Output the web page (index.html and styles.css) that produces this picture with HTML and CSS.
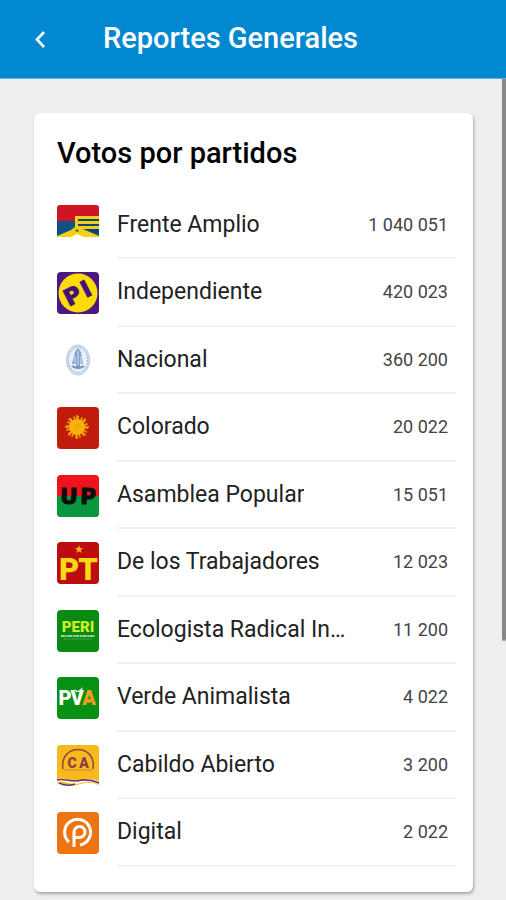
FILE: index.html
```html
<!DOCTYPE html>
<html lang="es">
<head>
<meta charset="utf-8">
<meta name="viewport" content="width=device-width, initial-scale=1">
<title>Reportes Generales</title>
<link rel="stylesheet" href="styles.css">
</head>
<body>
<header class="bar">
  <button class="back" type="button" aria-label="Volver">
    <svg viewBox="0 0 24 24" width="24" height="24"><path d="M16 5L9 12.500l7 7.500" fill="none" stroke="#fff" stroke-width="2.600"/></svg>
  </button>
  <h1 class="bar-title">Reportes Generales</h1>
</header>
<main class="content">
  <section class="card">
    <h2 class="card-title">Votos por partidos</h2>
    <ul class="list">
      <li class="row">
        <svg class="logo" viewBox="0 0 42 42"><path d="M3 0H39Q42 0 42 3V17H0V3Q0 0 3 0Z" fill="#cf1426"/><path d="M0 16H42V31H0Z" fill="#0d5187"/><path d="M18 25V12H42V28Z" fill="#12436d"/><path d="M18 11H42V14H21V16H42V19H21V21H42V24H26L42 31V32H0V31L14 25L18 22Z" fill="#f2cf18"/><path d="M18 26L20 24L22 26L20 27Z" fill="#725c12"/><path d="M14 32L20 29L27 32Z" fill="#fff"/></svg>
        <div class="entry"><span class="name">Frente Amplio</span><span class="votes">1 040 051</span></div>
      </li>
      <li class="row">
        <svg class="logo" viewBox="0 0 42 42"><rect width="42" height="42" rx="4" fill="#4b1882"/><circle cx="21" cy="21" r="19.500" fill="#fedb05"/><text class="mark wide" y="29" font-size="23" fill="#421276" stroke="#421276" stroke-width="1" transform="rotate(-27 21 21)"><tspan x="15">P</tspan><tspan x="30">I</tspan></text></svg>
        <div class="entry"><span class="name">Independiente</span><span class="votes">420 023</span></div>
      </li>
      <li class="row">
        <svg class="logo" viewBox="0 0 42 42"><ellipse cx="21" cy="20" rx="11.500" ry="15" fill="#d5e1f1" stroke="#b3c6df"/><ellipse cx="21" cy="20" rx="9.500" ry="12.500" fill="#e8f0f9" stroke="#9db5d5" stroke-dasharray="2 1"/><path d="M21 8L24 12L26 24H23V27H19V24H15L18 12Z" fill="#83a0c8"/><path d="M21 11V25M18 16V25M24 16V25" stroke="#dce8f5"/><path d="M15 26Q21 30 27 26" fill="none" stroke="#6f91bf" stroke-width="2"/></svg>
        <div class="entry"><span class="name">Nacional</span><span class="votes">360 200</span></div>
      </li>
      <li class="row">
        <svg class="logo" viewBox="0 0 42 42"><rect width="42" height="42" rx="4" fill="#c01b0b"/><circle cx="20" cy="20" r="9" fill="none" stroke="#ed9d09" stroke-width="4" stroke-dasharray="1.600 1.930"/><circle cx="20" cy="20" r="8" fill="#f9b40d"/><path d="M20 8V32M8 20H32M11.500 11.500L28.500 28.500M28.500 11.500L11.500 28.500" stroke="#f7aa0b" stroke-width="1.500"/></svg>
        <div class="entry"><span class="name">Colorado</span><span class="votes">20 022</span></div>
      </li>
      <li class="row">
        <svg class="logo" viewBox="0 0 42 42"><rect width="42" height="42" rx="4" fill="#ed141d"/><path d="M0 21H42V38Q42 42 38 42H4Q0 42 0 38Z" fill="#08973f"/><text class="mark wide" y="29" font-size="22" fill="#0b0d0a" stroke="#0b0d0a"><tspan x="12">U</tspan><tspan x="31">P</tspan></text></svg>
        <div class="entry"><span class="name">Asamblea Popular</span><span class="votes">15 051</span></div>
      </li>
      <li class="row">
        <svg class="logo" viewBox="0 0 42 42"><rect width="42" height="42" rx="4" fill="#bd0c0d"/><path d="M22 3L23 6H26L23.700 8L24.600 11L22 9.200L19.400 11L20.300 8L18 6H21Z" fill="#f7ba11"/><text class="mark thin" y="38" font-size="31" fill="#f8d817"><tspan x="12">P</tspan><tspan x="31">T</tspan></text></svg>
        <div class="entry"><span class="name">De los Trabajadores</span><span class="votes">12 023</span></div>
      </li>
      <li class="row">
        <svg class="logo" viewBox="0 0 42 42"><rect width="42" height="42" rx="4" fill="#088a13"/><text class="mark thin" x="21" y="22" font-size="15" fill="#c9ef22">PERI</text><path d="M4 26H38" stroke="#9bd39a" stroke-width="2" stroke-dasharray="4 .7 2 .5"/><path d="M7 29H35" stroke="#4cab50" stroke-dasharray="3 .7"/></svg>
        <div class="entry"><span class="name">Ecologista Radical In…</span><span class="votes">11 200</span></div>
      </li>
      <li class="row">
        <svg class="logo" viewBox="0 0 42 42"><rect width="42" height="42" rx="4" fill="#069113"/><text class="mark thin" y="28" font-size="20" fill="#fff"><tspan x="8">P</tspan><tspan x="20">V</tspan><tspan x="32" fill="#f49b20">A</tspan></text><path d="M17 12L21 14L26 10L24 15H19Z" fill="#e4f4e4"/><circle cx="32" cy="24" r="2" fill="#f49b20"/></svg>
        <div class="entry"><span class="name">Verde Animalista</span><span class="votes">4 022</span></div>
      </li>
      <li class="row">
        <svg class="logo" viewBox="0 0 42 42"><path d="M4 0H38Q42 0 42 4V40Q32 36 24 39Q12 43 0 38V4Q0 0 4 0Z" fill="#f8b91d"/><path d="M6 24C2 -2 40 -2 36 24" fill="none" stroke="#8d4845" stroke-width="1.500"/><path d="M7 25H35" stroke="#ce8635"/><text class="mark thin" y="23" font-size="14" fill="#8d3e48"><tspan x="15">C</tspan><tspan x="27">A</tspan></text><path d="M0 36Q5 34 10 36T22 37Q31 33 42 38" fill="none" stroke="#fff" stroke-width="3"/><path d="M0 35Q4 34 9 35T20 36Q31 33 42 38" fill="none" stroke="#73345d" stroke-width="1.500"/><path d="M2 38Q10 42 18 39" fill="none" stroke="#544078" stroke-width="1.500"/></svg>
        <div class="entry"><span class="name">Cabildo Abierto</span><span class="votes">3 200</span></div>
      </li>
      <li class="row">
        <svg class="logo" viewBox="0 0 42 42"><rect width="42" height="42" rx="4" fill="#ee7412"/><path d="M12 30A13 13 0 1 1 23 33" fill="none" stroke="#fff" stroke-width="3"/><path d="M17 35V20A5.500 5.500 0 1 1 22 25.500H18" fill="none" stroke="#fff" stroke-width="3"/></svg>
        <div class="entry"><span class="name">Digital</span><span class="votes">2 022</span></div>
      </li>
    </ul>
  </section>
  <div class="scroll-thumb"></div>
</main>
</body>
</html>
```
FILE: styles.css
```css
* {
  box-sizing: border-box;
}

body {
  margin: 0;
  background: #eee;
  color: #000;
  font-family: Roboto, "Liberation Sans", sans-serif;
}

.bar {
  display: flex;
  align-items: center;
  gap: 51px;
  padding: 20px 28px 21px;
  background: #0288d1;
  color: #fff;
  border-bottom: 1px solid #61aee8;
}

.back {
  display: flex;
  padding: 0;
  border: 0;
  background: none;
}

.bar-title {
  margin: 0;
  font-size: 29px;
  font-weight: 500;
  line-height: 37px;
}

.content {
  position: relative;
  padding: 34px 33px 8px 34px;
}

.card {
  padding: 20px 17px 25px 23px;
  border-radius: 6px;
  background: #fff;
  box-shadow: 1px 2px 3px rgba(0, 0, 0, 0.3);
}

.card-title {
  margin: 0 0 19px;
  font-size: 29px;
  font-weight: 500;
  line-height: 40px;
}

.list {
  margin: 0;
  padding: 0;
  list-style: none;
}

.row {
  display: flex;
  align-items: center;
  gap: 18px;
}

.logo {
  flex: none;
  width: 42px;
  height: 42px;
  overflow: visible;
}

.mark {
  font-family: "Open Sans", sans-serif;
  font-weight: 800;
  text-anchor: middle;
}

.wide {
  font-family: "DejaVu Sans", sans-serif;
  font-weight: 700;
}

.thin {
  font-family: Roboto, sans-serif;
  font-weight: 900;
}

.entry {
  display: flex;
  flex: 1;
  align-items: center;
  justify-content: space-between;
  gap: 24px;
  min-width: 0;
  height: 67px;
  padding-right: 8px;
  border-bottom: 2px solid #f1f1f1;
}

.row:nth-child(even) .entry {
  height: 68px;
}

.name {
  overflow: hidden;
  color: #222;
  font-size: 23px;
  line-height: 32px;
  text-overflow: ellipsis;
  white-space: nowrap;
}

.votes {
  flex: none;
  color: #444;
  font-size: 18px;
  line-height: 24px;
}

.scroll-thumb {
  position: absolute;
  top: 0;
  right: 0;
  width: 4px;
  height: 562px;
  border-radius: 0 0 2px 2px;
  background: #888;
}
```
